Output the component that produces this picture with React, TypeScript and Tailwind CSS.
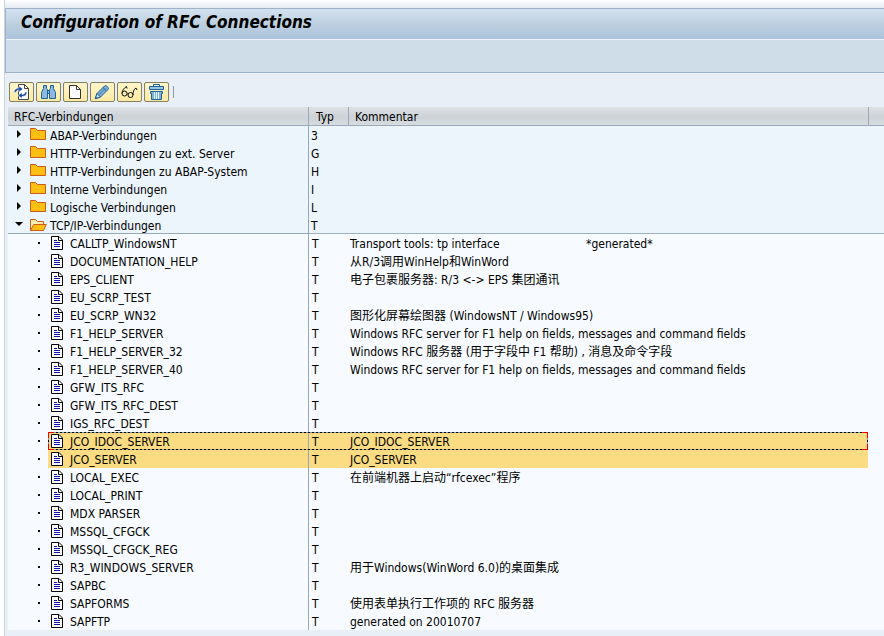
import React from "react";

type Folder = { name: string; type: string; open?: boolean };
type Connection = { name: string; comment?: string; note?: string; selected?: boolean; focused?: boolean };

const folders: Folder[] = [
  { name: "ABAP-Verbindungen", type: "3" },
  { name: "HTTP-Verbindungen zu ext. Server", type: "G" },
  { name: "HTTP-Verbindungen zu ABAP-System", type: "H" },
  { name: "Interne Verbindungen", type: "I" },
  { name: "Logische Verbindungen", type: "L" },
  { name: "TCP/IP-Verbindungen", type: "T", open: true },
];

const connections: Connection[] = [
  { name: "CALLTP_WindowsNT", comment: "Transport tools: tp interface", note: "*generated*" },
  { name: "DOCUMENTATION_HELP", comment: "从R/3调用WinHelp和WinWord" },
  { name: "EPS_CLIENT", comment: "电子包裹服务器: R/3 <-> EPS 集团通讯" },
  { name: "EU_SCRP_TEST" },
  { name: "EU_SCRP_WN32", comment: "图形化屏幕绘图器 (WindowsNT / Windows95)" },
  { name: "F1_HELP_SERVER", comment: "Windows RFC server for F1 help on fields, messages and command fields" },
  { name: "F1_HELP_SERVER_32", comment: "Windows RFC 服务器 (用于字段中 F1 帮助) , 消息及命令字段" },
  { name: "F1_HELP_SERVER_40", comment: "Windows RFC server for F1 help on fields, messages and command fields" },
  { name: "GFW_ITS_RFC" },
  { name: "GFW_ITS_RFC_DEST" },
  { name: "IGS_RFC_DEST" },
  { name: "JCO_IDOC_SERVER", comment: "JCO_IDOC_SERVER", selected: true, focused: true },
  { name: "JCO_SERVER", comment: "JCO_SERVER", selected: true },
  { name: "LOCAL_EXEC", comment: "在前端机器上启动“rfcexec”程序" },
  { name: "LOCAL_PRINT" },
  { name: "MDX PARSER" },
  { name: "MSSQL_CFGCK" },
  { name: "MSSQL_CFGCK_REG" },
  { name: "R3_WINDOWS_SERVER", comment: "用于Windows(WinWord 6.0)的桌面集成" },
  { name: "SAPBC" },
  { name: "SAPFORMS", comment: "使用表单执行工作项的 RFC 服务器" },
  { name: "SAPFTP", comment: "generated on 20010707" },
];

function FolderIcon({ open }: { open?: boolean }) {
  return (
    <svg width="17" height="14" viewBox="0 0 17 14" className="shrink-0" aria-hidden="true">
      {open ? (
        <>
          <path d="M.5 12.500v-11h5l2 2h6v3" fill="#fff0b0" stroke="#cf5a1c" />
          <path d="M.5 12.500l3.200-6h12.600l-2.800 6z" fill="#fdbf12" stroke="#cf5a1c" />
        </>
      ) : (
        <path d="M.5 11.500V.5h5l2 2h8v9z" fill="#fdbf12" stroke="#cf5a1c" />
      )}
    </svg>
  );
}

function DocumentIcon() {
  return (
    <svg width="12" height="14" viewBox="0 0 12 14" className="shrink-0" aria-hidden="true">
      <path d="M.5.5H8l3.500 3.500v9.500H.5z" fill="#fff" stroke="#000" />
      <path d="M7.500.5v4h4" fill="none" stroke="#000" />
      <path d="M3 4.500h3M3 6.500h6M3 8.500h6M3 10.500h6" fill="none" stroke="#1010b0" />
    </svg>
  );
}

const tools: { label: string; icon: React.ReactNode }[] = [
  {
    label: "Aktualisieren",
    icon: (
      <>
        <path d="M5.500.5h6l4 4v11h-10z" fill="#fff" stroke="#444" />
        <path d="M11.500.5v4h4" fill="none" stroke="#444" />
        <path d="M1 8.500C1 5.500 3 4 6 4V2l4 3-4 3V6C4.200 6 3 7 3 8.500z" fill="#1d4fa0" stroke="#fff" strokeWidth=".5" />
        <path d="M14 8c0 3-2 4.500-5 4.500v2l-4-3 4-3v2c1.800 0 3-1 3-2.500z" fill="#1d4fa0" stroke="#fff" strokeWidth=".5" />
      </>
    ),
  },
  {
    label: "Suchen",
    icon: (
      <g fill="#8cb9dd" stroke="#1a629b">
        <path d="M3.500 1.500h3v3l1 1v9h-6v-6l2-4z" />
        <path d="M13.500 1.500h-3v3l-1 1v9h6v-6l-2-4z" />
        <path d="M7.500 6.500h2v3h-2z" />
      </g>
    ),
  },
  {
    label: "Anlegen",
    icon: (
      <>
        <path d="M2.500 1.500h7l4 4v9h-11z" fill="#fff" stroke="#333" />
        <path d="M9.500 1.500v4h4" fill="none" stroke="#333" />
      </>
    ),
  },
  {
    label: "Ändern",
    icon: (
      <>
        <path d="M1.500 14.500l1.500-5 7.500-7.500c1.500-1.500 5 2 3.500 3.500L6.500 13z" fill="#7fb0d8" stroke="#1a629b" />
        <path d="M9 3.500l3.500 3.500" fill="none" stroke="#1a629b" />
        <path d="M4.500 11.200l6.500-6.500" fill="none" stroke="#3f83b8" />
        <path d="M1.200 14.800l1.800-5.300L6.500 13z" fill="#d5e6f3" stroke="#1a629b" />
        <path d="M1 15l.8-2.500 1.700 1.700z" fill="#1a629b" />
      </>
    ),
  },
  {
    label: "Anzeigen",
    icon: (
      <g fill="none" stroke="#111">
        <circle cx="3.500" cy="9.500" r="2.500" />
        <circle cx="9.500" cy="11" r="2.500" />
        <path d="M6 9.700l1.200.4M1 9.500c0-3 2-5.500 4.500-7l.5 2M12 11c0-3 .5-5.500 3-7l1 2" />
      </g>
    ),
  },
  {
    label: "Löschen",
    icon: (
      <>
        <path d="M1.500 2.500h14v3h-14z" fill="#9cc5e4" stroke="#1a629b" />
        <path d="M5.500 2.500v-2h6v2" fill="none" stroke="#1a629b" />
        <path d="M2.500 7.500h12v2h-1v6h-10v-6h-1z" fill="#7fb0d8" stroke="#1a629b" />
        <path d="M6.500 8v7M8.500 8v7M10.500 8v7" fill="none" stroke="#e6f2fb" />
      </>
    ),
  },
];

function FocusFrame() {
  return (
    <span className="pointer-events-none absolute top-0 left-10 block h-[18px] w-[820px]">
      <span className="absolute inset-x-0 top-0 h-px bg-[repeating-linear-gradient(90deg,#000_0_2px,#7e9cab_2px_4px)]" />
      <span className="absolute inset-x-0 bottom-0 h-px bg-[repeating-linear-gradient(90deg,#000_0_2px,#a9a37e_2px_4px)]" />
      <span className="absolute inset-y-0 left-0 w-px bg-[repeating-linear-gradient(#000_0_2px,#7e9cab_2px_4px)]" />
      <span className="absolute inset-y-0 right-0 w-px bg-[repeating-linear-gradient(#000_0_2px,#7e9cab_2px_4px)]" />
      <span className="absolute top-0 left-0 h-[6px] w-[6px] border-t border-l border-[#f00000]" />
      <span className="absolute bottom-0 left-0 h-[6px] w-[6px] border-b border-l border-[#f00000]" />
      <span className="absolute top-0 right-0 h-[6px] w-[6px] border-t border-r border-[#f00000]" />
      <span className="absolute right-0 bottom-0 h-[6px] w-[6px] border-r border-b border-[#f00000]" />
    </span>
  );
}

export default function App() {
  return (
    <div className="min-h-screen bg-white pl-1 font-['DejaVu_Sans_Condensed','DejaVu_Sans','Noto_Sans_CJK_SC',sans-serif] text-[12px] leading-[16px] text-black">
      <div className="min-h-screen border-l border-[#c9d3e0] bg-[#e8eff7]">
        <div className="h-2 bg-gradient-to-b from-white to-[#e4eaf3]" />
        <header className="border-y border-l border-[#9fb3c8] bg-[#cfdde8]">
          <h1 className="h-[31px] border-b border-[#eef4fa] bg-gradient-to-b from-[#d3e1f0] via-[#bdd0df] to-[#abc3dc] pl-[15px] text-[17px] leading-[26px] font-bold italic">
            Configuration of RFC Connections
          </h1>
          <div className="h-8" />
        </header>

        <div role="toolbar" aria-label="Funktionen" className="flex items-center gap-[2px] pt-[9px] pb-[5px] pl-1">
          {tools.map((tool) => (
            <button
              key={tool.label}
              type="button"
              aria-label={tool.label}
              className="flex h-5 w-[25px] items-center justify-center rounded-[2px] border border-[#85805f] bg-gradient-to-b from-[#fff6cc] to-[#fde9a0]"
            >
              <svg width="17" height="16" viewBox="0 0 17 16" className="shrink-0" aria-hidden="true">
                {tool.icon}
              </svg>
            </button>
          ))}
          <span className="ml-[2px] h-3 w-px bg-[#8f9aa5]" />
        </div>

        <div className="pl-[3px]">
          <table className="w-full table-fixed border-separate border-spacing-0">
            <colgroup>
              <col className="w-[301px]" />
              <col className="w-[40px]" />
              <col className="w-[520px]" />
              <col />
            </colgroup>
            <thead>
              <tr className="h-[19px] bg-gradient-to-b from-[#dfe3e6] via-[#cdd2d7] to-[#d8dde2] text-left">
                <th scope="col" className="border-r border-b border-[#9aaaba] p-0 pt-[2px] pl-[6px] font-normal">RFC-Verbindungen</th>
                <th scope="col" className="border-r border-b border-[#9aaaba] p-0 pt-[2px] pl-[7px] font-normal">Typ</th>
                <th scope="col" className="border-r border-b border-[#9aaaba] p-0 pt-[2px] pl-[6px] font-normal">Kommentar</th>
                <td className="border-b border-[#9aaaba] p-0" />
              </tr>
            </thead>
            <tbody className="bg-[#ecf4fc]">
              {folders.map((folder) => {
                const line = folder.open ? "border-b border-[#9db0c4]" : "";
                return (
                  <tr key={folder.name} className="h-[18px] align-top">
                    <td className={`border-r border-[#94a7bb] p-0 ${folder.open ? "border-b" : ""}`}>
                      <div className={`flex items-center ${folder.open ? "h-[17px]" : "h-[18px]"}`}>
                        <button type="button" aria-label={folder.name} aria-expanded={!!folder.open} className="flex w-[22px] justify-center pb-[2px]">
                          <svg width="8" height="8" viewBox="0 0 8 8" aria-hidden="true">
                            {folder.open ? <path d="M0 2h8L4 6z" /> : <path d="M2 0v8l4-4z" />}
                          </svg>
                        </button>
                        <FolderIcon open={folder.open} />
                        <span className="pt-[2px] pl-[3px]">{folder.name}</span>
                      </div>
                    </td>
                    <td className={`p-0 pl-[2px] ${line}`}>
                      <div className={`flex items-center pt-[2px] ${folder.open ? "h-[17px]" : "h-[18px]"}`}>{folder.type}</div>
                    </td>
                    <td className={`p-0 ${line}`} />
                    <td className={`p-0 ${line}`} />
                  </tr>
                );
              })}
            </tbody>
            <tbody className="bg-[#f7fbff]">
              {connections.map((item) => {
                const fill = item.selected ? "bg-[#fcdc82]" : "";
                return (
                  <tr key={item.name} aria-selected={!!item.selected} className="relative h-[18px]">
                    <td className="border-r border-[#94a7bb] p-0">
                      <div className="flex h-[18px] items-center">
                        <span className="flex w-10 justify-end pr-2">
                          <span className="h-[2px] w-[2px] bg-black" />
                        </span>
                        <span className={`flex h-[18px] flex-1 items-center gap-[7px] pl-[3px] ${fill}`}>
                          <DocumentIcon />
                          <span className="pt-[2px]">{item.name}</span>
                        </span>
                      </div>
                      {item.focused && <FocusFrame />}
                    </td>
                    <td className={`p-0 pt-[2px] pl-[3px] ${fill}`}>T</td>
                    <td className="p-0 pr-px">
                      <div className={`flex h-[18px] items-center pt-[2px] pl-[1px] whitespace-nowrap ${fill}`}>
                        <span className={item.note ? "w-[236px]" : ""}>{item.comment}</span>
                        {item.note && <span>{item.note}</span>}
                      </div>
                    </td>
                    <td className="p-0" />
                  </tr>
                );
              })}
            </tbody>
          </table>
        </div>
      </div>
    </div>
  );
}
